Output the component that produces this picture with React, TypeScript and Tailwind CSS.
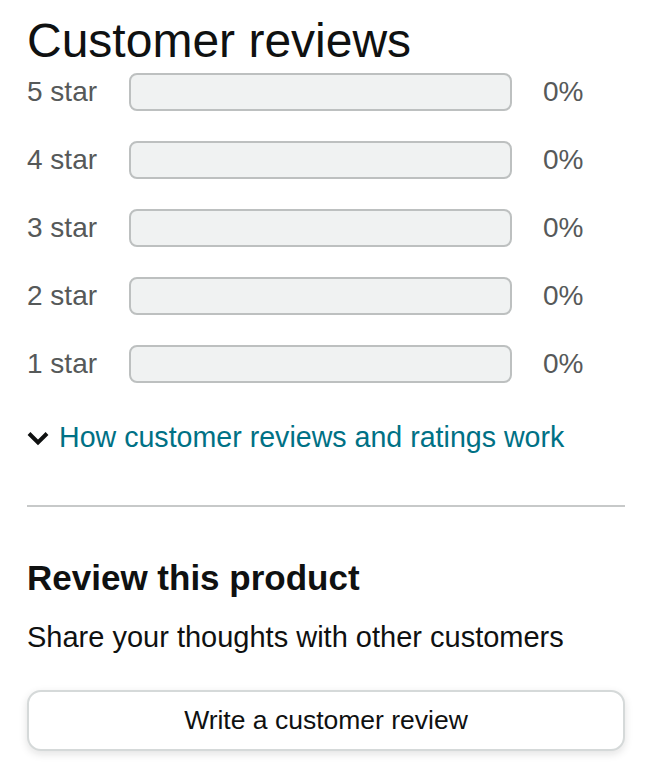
import React from 'react';

const rows = ['5 star', '4 star', '3 star', '2 star', '1 star'];

const App: React.FC = () => {
  return (
    <div className="min-h-screen bg-white px-[27px] pt-[13px] text-[#0f1111] [font-family:'Liberation_Sans',Arial,sans-serif]">
      <h1 className="text-[48px] leading-[56px] font-normal">Customer reviews</h1>

      {/* star histogram */}
      <div className="mt-[4px] flex flex-col gap-[30px]">
        {rows.map((label) => (
          <div key={label} className="flex items-center h-[38px]">
            <span className="w-[102px] text-[28px] text-[#565959]">{label}</span>
            <div className="w-[383px] h-[38px] rounded-[8px] border-2 border-[#bdc0c0] bg-[#f0f2f2]" />
            <span className="ml-[31px] text-[28px] text-[#565959]">0%</span>
          </div>
        ))}
      </div>

      <div className="mt-[38px] flex items-center h-[32px]">
        <svg width="22" height="16" viewBox="0 0 22 16" className="mt-[3px]">
          <path d="M2 2.5 L11 11.5 L20 2.5" fill="none" stroke="#0f1111" strokeWidth="4" />
        </svg>
        <a className="ml-[10px] text-[28.6px] leading-[32px] text-[#007185]">How customer reviews and ratings work</a>
      </div>

      <div className="mt-[52px] h-[2px] w-[598px] bg-[#c7c9c9]" />

      <h2 className="mt-[51px] text-[35px] leading-[40px] font-bold">Review this product</h2>
      <p className="mt-[22px] text-[29px] leading-[34px]">Share your thoughts with other customers</p>

      <button className="mt-[36px] w-[598px] h-[61px] rounded-[14px] border-2 border-[#d5d9d9] bg-white text-[26.5px] text-[#0f1111] shadow-[0_3px_8px_rgba(15,17,17,0.12)]">
        Write a customer review
      </button>
    </div>
  );
};

export default App;
